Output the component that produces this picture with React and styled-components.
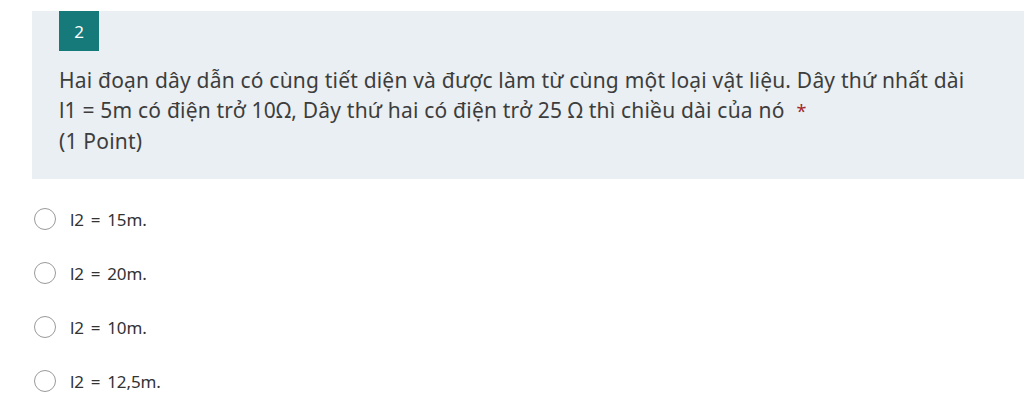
import React from "react";
import styled, { createGlobalStyle } from "styled-components";

const GlobalStyle = createGlobalStyle`
  body {
    margin: 0;
    background: #ffffff;
    font-family: "Noto Sans", "Open Sans", sans-serif;
  }
`;

const Page = styled.div`
  width: 1024px;
  height: 417px;
  overflow: hidden;
  padding-top: 11px;
  box-sizing: border-box;
`;

const QuestionPanel = styled.div`
  margin-left: 32px;
  height: 168px;
  background: #e9eff2;
  padding-left: 27px;
  box-sizing: border-box;
`;

const NumberBadge = styled.div`
  width: 40px;
  height: 40px;
  background: #177a7a;
  color: #ffffff;
  font-size: 17px;
  display: flex;
  align-items: center;
  justify-content: center;
`;

const QuestionText = styled.div`
  margin-top: 14px;
  font-size: 21px;
  line-height: 30px;
  color: #3d3d3d;
  letter-spacing: 0.2px;
  white-space: nowrap;
`;

const Required = styled.span`
  color: #a4262c;
  font-size: 18px;
  margin-left: 12px;
`;

const Options = styled.div`
  display: flex;
  flex-direction: column;
  gap: 32px;
  padding: 29px 0 0 34px;
`;

const Option = styled.label`
  display: flex;
  align-items: center;
  gap: 14px;
  height: 22px;
  font-size: 17px;
  color: #333333;
  letter-spacing: -0.1px;
  word-spacing: 2.5px;
`;

const Radio = styled.span`
  width: 22px;
  height: 22px;
  border-radius: 50%;
  border: 1.5px solid #9a9a9a;
  box-sizing: border-box;
  flex-shrink: 0;
`;

const answers = ["l2 = 15m.", "l2 = 20m.", "l2 = 10m.", "l2 = 12,5m."];

const App = () => {
  return (
    <>
      <GlobalStyle />
      <Page>
        <QuestionPanel>
          <NumberBadge>2</NumberBadge>
          <QuestionText>
            Hai đoạn dây dẫn có cùng tiết diện và được làm từ cùng một loại vật
            liệu. Dây thứ nhất dài
            <br />
            l1 = 5m có điện trở 10Ω, Dây thứ hai có điện trở 25 Ω thì chiều dài
            của nó
            <Required>*</Required>
            <br />
            (1 Point)
          </QuestionText>
        </QuestionPanel>
        <Options>
          {answers.map((a) => (
            <Option key={a}>
              <Radio />
              {a}
            </Option>
          ))}
        </Options>
      </Page>
    </>
  );
};

export default App;
